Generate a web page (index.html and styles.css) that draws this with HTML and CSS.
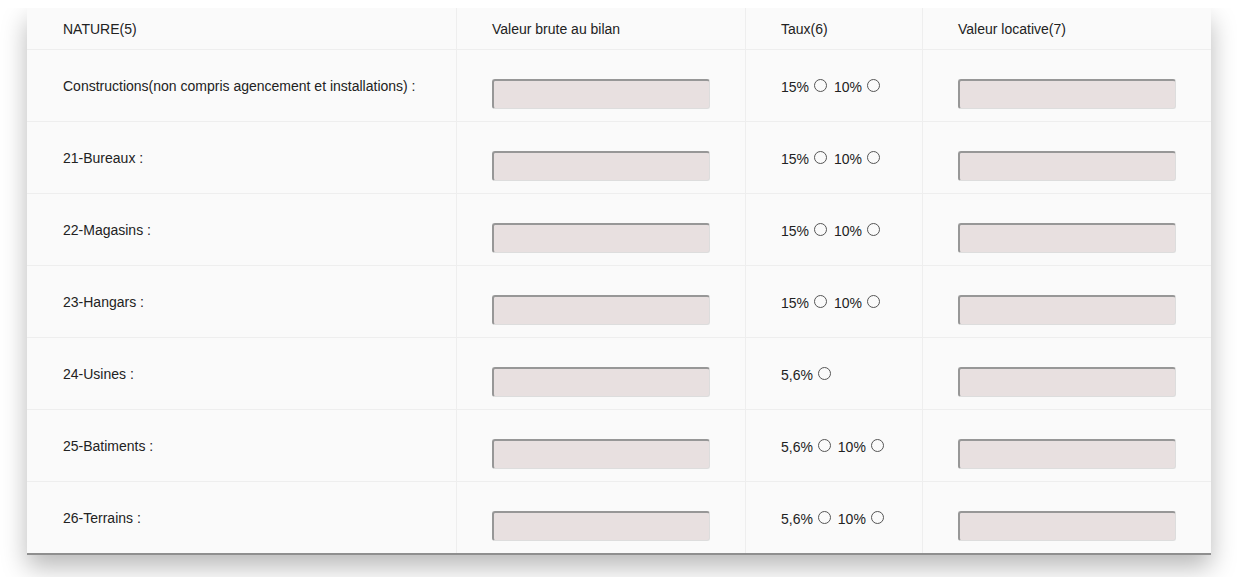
FILE: index.html
```
<!DOCTYPE html>
<html lang="fr">
<head>
<meta charset="UTF-8">
<meta name="viewport" content="width=device-width, initial-scale=1.0">
<title>Valeur locative</title>
<link rel="stylesheet" href="styles.css">
</head>
<body>
<div class="table-wrap">
<table class="loc-table">
  <thead>
    <tr>
      <th class="col-nature">NATURE(5)</th>
      <th class="col-brute">Valeur brute au bilan</th>
      <th class="col-taux">Taux(6)</th>
      <th class="col-loc">Valeur locative(7)</th>
    </tr>
  </thead>
  <tbody>
    <tr>
      <td>Constructions(non compris agencement et installations) :</td>
      <td><input type="text" class="field"></td>
      <td>15%<input type="radio" name="t1"> 10%<input type="radio" name="t1"></td>
      <td><input type="text" class="field"></td>
    </tr>
    <tr>
      <td>21-Bureaux :</td>
      <td><input type="text" class="field"></td>
      <td>15%<input type="radio" name="t2"> 10%<input type="radio" name="t2"></td>
      <td><input type="text" class="field"></td>
    </tr>
    <tr>
      <td>22-Magasins :</td>
      <td><input type="text" class="field"></td>
      <td>15%<input type="radio" name="t3"> 10%<input type="radio" name="t3"></td>
      <td><input type="text" class="field"></td>
    </tr>
    <tr>
      <td>23-Hangars :</td>
      <td><input type="text" class="field"></td>
      <td>15%<input type="radio" name="t4"> 10%<input type="radio" name="t4"></td>
      <td><input type="text" class="field"></td>
    </tr>
    <tr>
      <td>24-Usines :</td>
      <td><input type="text" class="field"></td>
      <td>5,6%<input type="radio" name="t5"></td>
      <td><input type="text" class="field"></td>
    </tr>
    <tr>
      <td>25-Batiments :</td>
      <td><input type="text" class="field"></td>
      <td>5,6%<input type="radio" name="t6"> 10%<input type="radio" name="t6"></td>
      <td><input type="text" class="field"></td>
    </tr>
    <tr>
      <td>26-Terrains :</td>
      <td><input type="text" class="field"></td>
      <td>5,6%<input type="radio" name="t7"> 10%<input type="radio" name="t7"></td>
      <td><input type="text" class="field"></td>
    </tr>
  </tbody>
</table>
</div>
</body>
</html>
```

FILE: styles.css
```
body {
  margin: 8px 0 0;
  padding-bottom: 24px;
  background: #fff;
  font-family: "Liberation Sans", Arial, sans-serif;
  font-size: 14px;
  color: #222;
}
.table-wrap {
  margin: 0 26px 0 27px;
  background: #fafafa;
  border-bottom: 2px solid #8f8f8f;
  box-shadow: 0 12px 24px rgba(0, 0, 0, 0.28);
}
.loc-table {
  width: 100%;
  border-collapse: collapse;
  table-layout: fixed;
}
.loc-table th {
  height: 41px;
  padding: 0 0 0 36px;
  text-align: left;
  font-weight: normal;
  vertical-align: middle;
  border-bottom: 1px solid #eee;
  border-right: 1px solid #eee;
}
.loc-table td {
  height: 71px;
  padding: 0 0 0 36px;
  vertical-align: middle;
  border-bottom: 1px solid #eee;
  border-right: 1px solid #eee;
}
.loc-table td + td,
.loc-table th + th {
  padding-left: 35px;
}
.loc-table tr:last-child td {
  border-bottom: none;
}
.loc-table th:last-child,
.loc-table td:last-child {
  border-right: none;
}
.col-nature { width: 393px; }
.col-brute { width: 253px; }
.col-taux { width: 141px; }
.field {
  box-sizing: border-box;
  display: block;
  width: 218px;
  height: 30px;
  margin-top: 16px;
  background: #e8e0e0;
  border-top: 2px solid #979797;
  border-left: 2px solid #979797;
  border-right: 1px solid #ddd;
  border-bottom: 1px solid #ddd;
  border-radius: 3px;
}
input[type="radio"] {
  -webkit-appearance: none;
  appearance: none;
  box-sizing: border-box;
  width: 13px;
  height: 13px;
  margin: 3px 3px 0 5px;
  border: 1px solid #555;
  border-radius: 50%;
  background: #fafafa;
}
```
